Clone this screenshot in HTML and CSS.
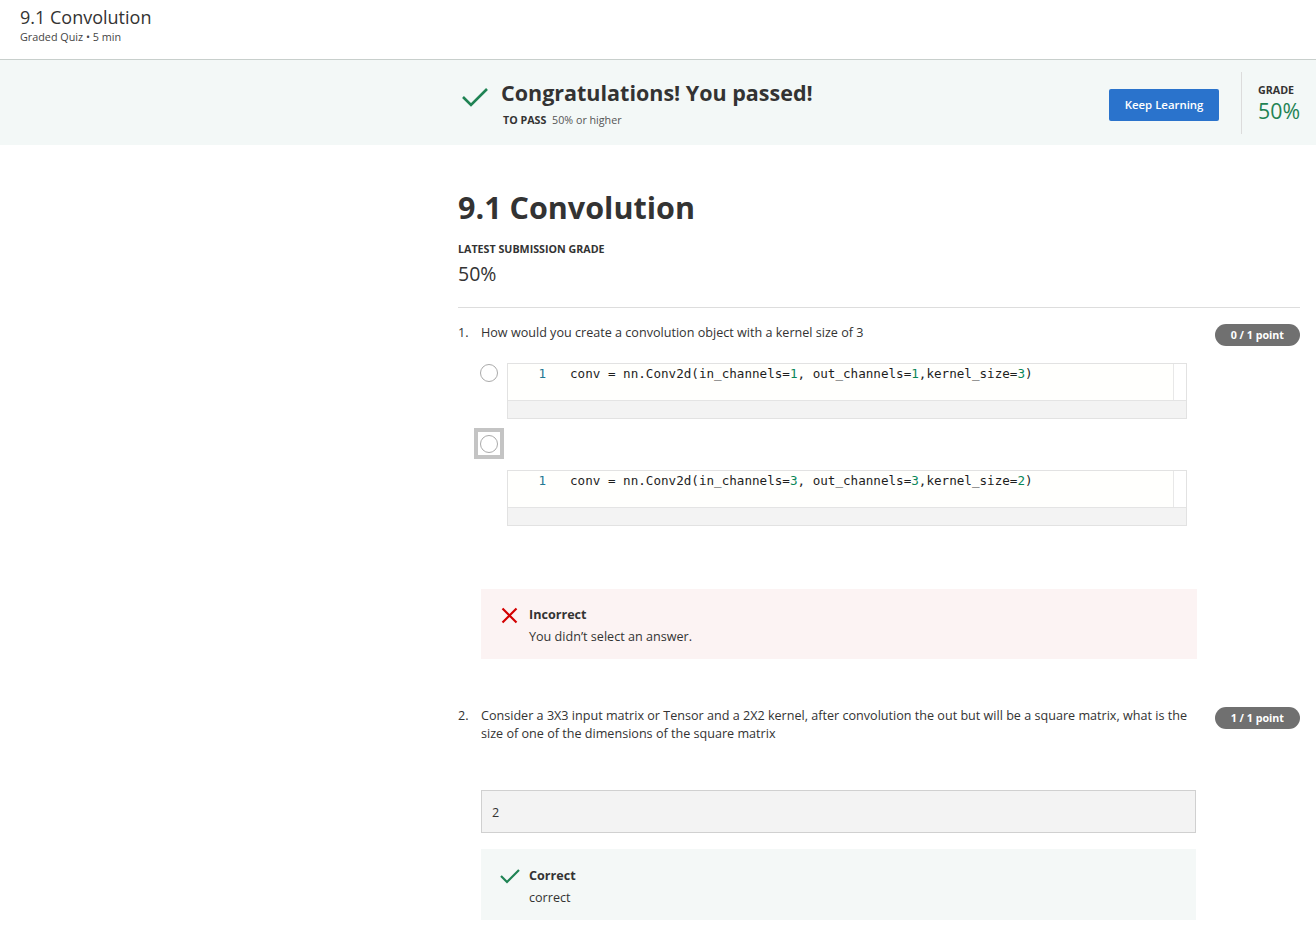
FILE: index.html
```html
<!DOCTYPE html>
<html>
<head>
<meta charset="utf-8">
<link rel="stylesheet" href="styles.css">
</head>
<body>
<header class="top">
  <div class="top-title">9.1 Convolution</div>
  <div class="top-sub">Graded Quiz • 5 min</div>
</header>

<section class="banner">
  <div class="banner-inner">
    <svg class="banner-check" width="28" height="22" viewBox="0 0 28 22"><path d="M2 11 L10 19 L26 3" fill="none" stroke="#1f8354" stroke-width="2.6"/></svg>
    <div class="banner-text">
      <div class="banner-head">Congratulations! You passed!</div>
      <div class="banner-pass"><b>TO PASS</b> 50% or higher</div>
    </div>
    <button class="keep">Keep Learning</button>
    <div class="grade-box">
      <div class="grade-label">GRADE</div>
      <div class="grade-val">50%</div>
    </div>
  </div>
</section>

<main class="main">
  <h1 class="title">9.1 Convolution</h1>
  <div class="latest-label">LATEST SUBMISSION GRADE</div>
  <div class="latest-val">50%</div>
  <hr class="divider">

  <div class="q">
    <div class="q-row">
      <span class="q-num">1.</span>
      <span class="q-text">How would you create a convolution object with a kernel size of 3</span>
      <span class="pill">0 / 1 point</span>
    </div>
    <div class="options">
      <div class="opt">
        <span class="radio"></span>
        <div class="code">
          <div class="code-main">
            <div class="code-line"><span class="ln">1</span><span class="src">conv = nn.Conv2d(in_channels=<span class="num">1</span>, out_channels=<span class="num">1</span>,kernel_size=<span class="num">3</span>)</span></div>
            <div class="code-sb"></div>
          </div>
          <div class="code-hbar"></div>
        </div>
      </div>
      <div class="opt opt-focus">
        <span class="focus-box"><span class="radio"></span></span>
      </div>
      <div class="opt opt-code2">
        <span class="radio-spacer"></span>
        <div class="code">
          <div class="code-main">
            <div class="code-line"><span class="ln">1</span><span class="src">conv = nn.Conv2d(in_channels=<span class="num">3</span>, out_channels=<span class="num">3</span>,kernel_size=<span class="num">2</span>)</span></div>
            <div class="code-sb"></div>
          </div>
          <div class="code-hbar"></div>
        </div>
      </div>
    </div>
    <div class="fb fb-bad">
      <svg class="fb-icon" width="17" height="17" viewBox="0 0 17 17"><path d="M1.5 1.5 L15.5 15.5 M15.5 1.5 L1.5 15.5" stroke="#d30001" stroke-width="2.2" fill="none"/></svg>
      <div>
        <div class="fb-head">Incorrect</div>
        <div class="fb-text">You didn’t select an answer.</div>
      </div>
    </div>
  </div>

  <div class="q q2">
    <div class="q-row">
      <span class="q-num">2.</span>
      <span class="q-text">Consider a 3X3 input matrix or Tensor and a 2X2 kernel, after convolution the out but will be a square matrix, what is the size of one of the dimensions of the square matrix</span>
      <span class="pill">1 / 1 point</span>
    </div>
    <div class="answer">2</div>
    <div class="fb fb-good">
      <svg class="fb-icon fb-icon-good" width="20" height="16" viewBox="0 0 20 16"><path d="M1 8 L7 14 L19 2" fill="none" stroke="#1f8354" stroke-width="2.2"/></svg>
      <div>
        <div class="fb-head">Correct</div>
        <div class="fb-text">correct</div>
      </div>
    </div>
  </div>
</main>
</body>
</html>
```

FILE: styles.css
```css
* { box-sizing: border-box; }
body {
  margin: 0;
  font-family: "Open Sans", "Noto Sans", sans-serif;
  color: #333;
  background: #fff;
}
.top {
  height: 60px;
  padding: 5px 20px 0;
  border-bottom: 1px solid #c8cfcc;
}
.top-title { font-size: 18px; line-height: 24px; color: #333; }
.top-sub { font-size: 10.8px; line-height: 16px; color: #444; }

.banner {
  background: #f3f8f7;
  height: 85px;
}
.banner-inner {
  display: flex;
  align-items: center;
  height: 100%;
  padding-left: 461px;
  padding-right: 16px;
}
.banner-check { margin-right: 12px; margin-top: -12px; }
.banner-text { flex: 1; margin-top: 2px; }
.banner-head { font-size: 21.5px; font-weight: 700; line-height: 30px; color: #333; margin-top: -1px; }
.banner-pass { font-size: 10.7px; line-height: 16px; color: #555; margin-top: 4px; padding-left: 2px; }
.banner-pass b { color: #333; margin-right: 3px; }
.keep {
  background: #2a73cc;
  color: #fff;
  border: 0;
  border-radius: 2px;
  font-family: inherit;
  font-size: 11.4px;
  font-weight: 600;
  width: 110px;
  height: 32px;
  margin-right: 22px;
  margin-top: 4px;
}
.grade-box {
  border-left: 1px solid #dcdcdc;
  height: 62px;
  padding-left: 16px;
  padding-top: 11px;
}
.grade-label { font-size: 10.7px; font-weight: 700; line-height: 15px; color: #333; }
.grade-val { font-size: 21.3px; line-height: 25px; color: #1f8354; }

.main {
  margin-left: 458px;
  margin-right: 16px;
  padding-top: 40px;
}
.title {
  margin: 0;
  font-size: 30.5px;
  font-weight: 700;
  line-height: 44px;
  color: #333;
}
.latest-label { font-size: 10.7px; font-weight: 700; line-height: 15px; margin-top: 13px; color: #333; }
.latest-val { font-size: 19.5px; line-height: 28px; margin-top: 3px; color: #333; }
.divider { border: 0; border-top: 1px solid #ddd; margin: 19px 0 0; }

.q { padding-top: 16px; }
.q-row { display: flex; align-items: flex-start; }
.q-num { width: 23px; font-size: 12.6px; line-height: 18px; flex: none; color: #333; }
.q-text { flex: 1; font-size: 12.6px; line-height: 18px; padding-right: 24px; color: #333; }
.pill {
  flex: none;
  background: #707070;
  color: #fff;
  font-size: 10.7px;
  font-weight: 700;
  border-radius: 11px;
  height: 22px;
  line-height: 22px;
  padding: 0 16px;
  margin-top: 0;
}

.options { padding-left: 22px; padding-top: 17px; }
.opt { display: flex; align-items: flex-start; }
.radio {
  display: block;
  width: 18px;
  height: 18px;
  border: 1.5px solid #aaa;
  border-radius: 50%;
  background: #fff;
  flex: none;
}
.opt > .radio { margin-top: 1px; margin-right: 9px; }
.code {
  width: 680px;
  border: 1px solid #e2e2e2;
  background: #fffffe;
}
.code-main { display: flex; height: 37px; border-bottom: 1px solid #e4e4e4; }
.code-line {
  flex: 1;
  font-family: "DejaVu Sans Mono", monospace;
  font-size: 12.6px;
  line-height: 20px;
  color: #1e1e1e;
  white-space: pre;
  background: #fffffd;
}
.ln { display: inline-block; width: 38px; text-align: right; color: #237893; padding-right: 24px; box-sizing: content-box; }
.num { color: #098658; }
.code-sb { width: 13px; border-left: 1px solid #e8e8e8; background: #fff; }
.code-hbar { height: 17px; background: #f3f3f3; }

.opt-focus { margin-top: 9px; margin-left: -6px; }
.focus-box {
  display: flex;
  align-items: center;
  justify-content: center;
  width: 30px;
  height: 31px;
  border: 4px solid #c4c4c4;
}
.opt-code2 { margin-top: 11px; }
.radio-spacer { width: 27px; flex: none; }

.fb {
  display: flex;
  align-items: flex-start;
  margin-left: 23px;
  width: 716px;
  padding: 17px 20px 13px;
}
.fb-bad { background: #fcf3f3; margin-top: 63px; }
.fb-good { background: #f4f8f7; margin-top: 16px; width: 715px; padding: 18px 20px 13px 19px; }
.fb-icon { flex: none; margin-right: 11px; margin-top: 1px; }
.fb-icon-good { margin-right: 9px; }
.fb-head { font-size: 12.6px; font-weight: 700; line-height: 18px; color: #333; }
.fb-text { font-size: 12.6px; line-height: 18px; margin-top: 4px; color: #333; }

.q2 { padding-top: 48px; }
.answer {
  margin-left: 23px;
  width: 715px;
  height: 43px;
  margin-top: 47px;
  background: #f3f3f3;
  border: 1px solid #d0d0d0;
  font-size: 12.6px;
  line-height: 43px;
  padding-left: 10px;
}
```
